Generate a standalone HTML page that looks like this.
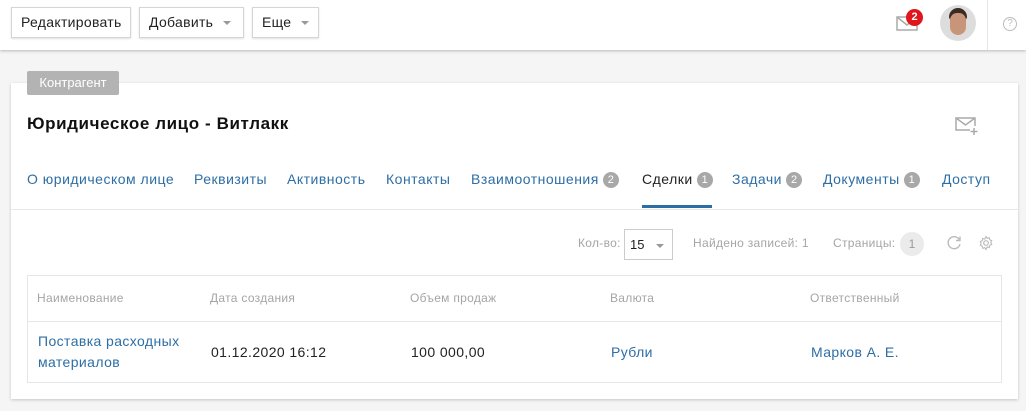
<!DOCTYPE html>
<html><head><meta charset="utf-8"><style>
*{box-sizing:border-box;margin:0;padding:0}
body{width:1026px;height:411px;background:#f5f5f5;font-family:"Liberation Sans","DejaVu Sans",sans-serif;position:relative;overflow:hidden;color:#222}
.abs{position:absolute}
.hdr{left:0;top:0;width:1026px;height:50px;background:#fff;box-shadow:0 1px 3px rgba(0,0,0,.25)}
.btn{position:absolute;top:7px;height:31px;border:1px solid #d5d5d5;background:#fff;box-shadow:0 1px 2px rgba(0,0,0,.12);font-size:14px;line-height:29px;padding-left:9px;color:#222;letter-spacing:.3px}
.caret{display:inline-block;width:0;height:0;border-left:4px solid transparent;border-right:4px solid transparent;border-top:4px solid #999;vertical-align:middle;margin-left:10px}
.card{left:11px;top:83px;width:1007px;height:316px;background:#fff;box-shadow:0 1px 3px rgba(0,0,0,.2)}
.tag{left:27px;top:71px;width:92px;height:24px;background:#b3b3b3;color:#fff;font-size:13px;line-height:23px;text-align:center;border-radius:2px}
.tab{position:absolute;top:171px;font-size:14px;color:#2d6ea5;letter-spacing:.5px}
.b{display:inline-block;width:16px;height:16px;border-radius:8px;background:#a8a8a8;color:#fff;font-size:11px;line-height:16px;text-align:center;vertical-align:1px;margin-left:4px;letter-spacing:0}
.g{color:#a5a5a5;font-size:12px;letter-spacing:.3px}
.th{position:absolute;top:291px;font-size:12px;color:#a5a5a5;letter-spacing:.3px}
.td{position:absolute;font-size:14px;letter-spacing:.4px}
</style></head><body>
<div class="abs hdr"></div>
<div class="btn" style="left:11px;width:120px">Редактировать</div>
<div class="btn" style="left:139px;width:105px">Добавить<span class="caret"></span></div>
<div class="btn" style="left:252px;width:67px">Еще<span class="caret"></span></div>
<svg class="abs" style="left:896px;top:16px" width="22" height="15" viewBox="0 0 22 15"><rect x="1" y="1" width="20" height="13" fill="none" stroke="#aaa" stroke-width="1.5"/><path d="M1 1 L11 9 L21 1" fill="none" stroke="#aaa" stroke-width="1.5"/></svg>
<div class="abs" style="left:906px;top:9px;width:17px;height:17px;border-radius:50%;background:#e0161c;color:#fff;font-size:11px;line-height:17px;text-align:center;font-weight:bold">2</div>
<div class="abs" style="left:940px;top:5px;width:36px;height:36px;border-radius:50%;background:#ddd;overflow:hidden">
<div class="abs" style="left:9px;top:3px;width:18px;height:12px;border-radius:9px 9px 3px 3px;background:#3a2c25"></div>
<div class="abs" style="left:10px;top:8px;width:16px;height:22px;border-radius:8px 8px 9px 9px;background:#c8957a"></div>
</div>
<div class="abs" style="left:987px;top:0;width:1px;height:50px;background:#e6e6e6"></div>
<div class="abs" style="left:1003px;top:17px;width:14px;height:14px;border:1px solid #bbb;border-radius:50%;color:#bbb;font-size:10px;line-height:12px;text-align:center">?</div>
<div class="abs card"></div>
<div class="abs tag">Контрагент</div>
<div class="abs" style="left:27px;top:114px;font-size:17px;font-weight:bold;color:#111;letter-spacing:.6px">Юридическое лицо - Витлакк</div>
<svg class="abs" style="left:955px;top:117px" width="24" height="18" viewBox="0 0 24 18"><path d="M15 13H1V1h19v8" fill="none" stroke="#aaa" stroke-width="1.5"/><path d="M1 1l9.5 7L20 1" fill="none" stroke="#aaa" stroke-width="1.5"/><path d="M19 11v7M15.5 14.5h7" stroke="#aaa" stroke-width="1.5"/></svg>
<div class="tab" style="left:27px">О юридическом лице</div>
<div class="tab" style="left:194px">Реквизиты</div>
<div class="tab" style="left:287px">Активность</div>
<div class="tab" style="left:386px">Контакты</div>
<div class="tab" style="left:471px">Взаимоотношения<span class="b">2</span></div>
<div class="tab" style="left:642px;color:#222">Сделки<span class="b">1</span></div>
<div class="tab" style="left:732px">Задачи<span class="b">2</span></div>
<div class="tab" style="left:823px">Документы<span class="b">1</span></div>
<div class="tab" style="left:942px">Доступ</div>
<div class="abs" style="left:642px;top:205px;width:70px;height:3px;background:#2d6ea5"></div>
<div class="abs" style="left:11px;top:209px;width:1007px;height:1px;background:#e8e8e8"></div>
<div class="abs g" style="left:578px;top:236px">Кол-во:</div>
<div class="abs" style="left:624px;top:229px;width:49px;height:31px;border:1px solid #ccc;font-size:13px;line-height:29px;padding-left:5px;color:#222">15<span class="caret" style="margin-left:12px"></span></div>
<div class="abs g" style="left:693px;top:236px">Найдено записей: 1</div>
<div class="abs g" style="left:833px;top:236px">Страницы:</div>
<div class="abs" style="left:900px;top:232px;width:24px;height:24px;border-radius:50%;background:#ebebeb;color:#999;font-size:12px;line-height:24px;text-align:center">1</div>
<svg class="abs" style="left:946px;top:235px" width="16" height="16" viewBox="0 0 16 16"><path d="M13.5 5A6 6 0 1 0 14 9" fill="none" stroke="#bbb" stroke-width="1.4"/><path d="M14 1.5V5.5H10" fill="none" stroke="#bbb" stroke-width="1.4"/></svg>
<svg class="abs" style="left:978px;top:235px" width="16" height="16" viewBox="0 0 16 16"><circle cx="8" cy="8" r="2.3" fill="none" stroke="#bbb" stroke-width="1.2"/><path d="M8 1.5l1.2 1.8 2.1-.6.4 2.1 2 .9-.9 1.9.9 1.9-2 .9-.4 2.1-2.1-.6L8 14.5l-1.2-1.8-2.1.6-.4-2.1-2-.9.9-1.9-.9-1.9 2-.9.4-2.1 2.1.6z" fill="none" stroke="#bbb" stroke-width="1.1"/></svg>
<div class="abs" style="left:27px;top:275px;width:975px;height:108px;border:1px solid #e6e6e6"></div>
<div class="abs" style="left:28px;top:321px;width:973px;height:1px;background:#e6e6e6"></div>
<div class="th" style="left:37px">Наименование</div>
<div class="th" style="left:210px">Дата создания</div>
<div class="th" style="left:410px">Объем продаж</div>
<div class="th" style="left:610px">Валюта</div>
<div class="th" style="left:810px">Ответственный</div>
<div class="td" style="left:38px;top:331px;color:#2d6ea5;line-height:21px">Поставка расходных<br>материалов</div>
<div class="td" style="left:211px;top:344px">01.12.2020 16:12</div>
<div class="td" style="left:411px;top:344px">100 000,00</div>
<div class="td" style="left:611px;top:344px;color:#2d6ea5">Рубли</div>
<div class="td" style="left:811px;top:344px;color:#2d6ea5">Марков А. Е.</div>
</body></html>
